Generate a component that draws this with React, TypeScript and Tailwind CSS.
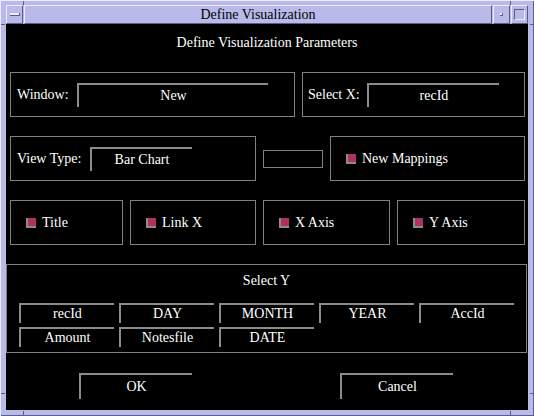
const font = { fontFamily: '"Liberation Serif", "Times New Roman", serif' };

const Check = () => (
  <span className="w-[10px] h-[10px] border-l-2 border-b-2 border-[#8c8c8c] flex">
    <span className="flex-1 bg-[#b0305f]" />
  </span>
);

const Field = ({ w, h = "h-[24px]", children }: { w: string; h?: string; children?: React.ReactNode }) => (
  <div className={`${w} ${h} border-t-2 border-l-2 border-[#8c8c8c] flex items-center justify-center text-white`}>
    {children}
  </div>
);

const CheckBox = ({ label, w }: { label: string; w: string }) => (
  <div className={`${w} h-[45px] border border-[#808080] flex items-center pl-[15px] gap-[6px]`}>
    <Check />
    <span>{label}</span>
  </div>
);

export default function App() {
  const yCols = ["recId", "DAY", "MONTH", "YEAR", "AccId", "Amount", "Notesfile", "DATE"];
  return (
    <div
      style={font}
      className="w-[534px] h-[416px] bg-[#babaea] relative border-t border-l border-[#ececff] text-[14px] leading-[16px]"
    >
      {/* frame notches */}
      <div className="absolute left-[22px] top-0 w-[1px] h-[4px] bg-[#5c5c8c]" />
      <div className="absolute left-[509px] top-0 w-[1px] h-[4px] bg-[#5c5c8c]" />
      <div className="absolute left-[22px] bottom-0 w-[1px] h-[5px] bg-[#5c5c8c]" />
      <div className="absolute left-[509px] bottom-0 w-[1px] h-[5px] bg-[#5c5c8c]" />
      <div className="absolute left-0 top-[23px] w-[4px] h-[1px] bg-[#5c5c8c]" />
      <div className="absolute right-0 top-[23px] w-[4px] h-[1px] bg-[#5c5c8c]" />
      <div className="absolute left-0 top-[392px] w-[4px] h-[1px] bg-[#5c5c8c]" />
      <div className="absolute right-0 top-[392px] w-[4px] h-[1px] bg-[#5c5c8c]" />

      <div className="absolute inset-0 border-r border-b border-[#5c5c8c] pointer-events-none" />

      <div className="pl-[5px] pt-[4px] flex flex-col">
        {/* title bar */}
        <div className="flex h-[19px] w-[522px] gap-[1px]">
          <div className="w-[17px] h-full bg-[#babaea] border-t border-l border-[#ececff] border-r border-b border-r-[#5c5c8c] border-b-[#5c5c8c] flex items-center justify-center">
            <div className="w-[10px] h-[3px] bg-[#ececff] border-b border-r border-[#5c5c8c]" />
          </div>
          <div className="flex-1 h-full bg-[#babaea] border-t border-l border-[#ececff] border-r border-b border-r-[#5c5c8c] border-b-[#5c5c8c] flex items-center justify-center text-black">
            Define Visualization
          </div>
          <div className="w-[17px] h-full bg-[#babaea] border-t border-l border-[#ececff] border-r border-b border-r-[#5c5c8c] border-b-[#5c5c8c] flex items-center justify-center">
            <div className="w-[3px] h-[3px] bg-[#ececff] border-b border-r border-[#5c5c8c]" />
          </div>
          <div className="w-[17px] h-full bg-[#babaea] border-t border-l border-[#ececff] border-r border-b border-r-[#5c5c8c] border-b-[#5c5c8c] flex items-center justify-center">
            <div className="w-[11px] h-[11px] border border-t-[#5c5c8c] border-l-[#5c5c8c] border-r-[#ececff] border-b-[#ececff]" />
          </div>
        </div>

        {/* content */}
        <div className="w-[522px] h-[386px] bg-black text-white flex flex-col">
          <div className="h-[38px] flex items-center justify-center">Define Visualization Parameters</div>

          <div className="mt-[10px] pl-[4px] flex gap-[7px]">
            <div className="w-[285px] h-[45px] border border-[#808080] flex items-center pl-[6px]">
              <span className="w-[60px]">Window:</span>
              <Field w="w-[191px]">New</Field>
            </div>
            <div className="w-[223px] h-[45px] border border-[#808080] flex items-center pl-[5px]">
              <span className="w-[59px]">Select X:</span>
              <Field w="w-[132px]">recId</Field>
            </div>
          </div>

          <div className="mt-[19px] pl-[4px] flex items-center gap-[7px]">
            <div className="w-[246px] h-[45px] border border-[#808080] flex items-center pl-[6px]">
              <span className="w-[73px]">View Type:</span>
              <Field w="w-[102px]">Bar Chart</Field>
            </div>
            <div className="w-[60px] h-[18px] border border-[#808080]" />
            <div className="w-[195px] h-[45px] border border-[#808080] flex items-center pl-[15px] gap-[6px]">
              <Check />
              <span>New Mappings</span>
            </div>
          </div>

          <div className="mt-[19px] pl-[4px] flex gap-[7px]">
            <CheckBox label="Title" w="w-[113px]" />
            <CheckBox label="Link X" w="w-[126px]" />
            <CheckBox label="X Axis" w="w-[127px]" />
            <CheckBox label="Y Axis" w="w-[128px]" />
          </div>

          <div className="mt-[19px] w-[521px] h-[89px] border border-[#808080] flex flex-col pt-[8px]">
            <div className="text-center h-[16px]">Select Y</div>
            <div className="mt-[14px] pl-[12px] grid grid-cols-[repeat(5,95px)] gap-x-[5px] gap-y-[4px]">
              {yCols.map((c) => (
                <Field key={c} w="w-[95px]" h="h-[20px]">
                  {c}
                </Field>
              ))}
            </div>
          </div>

          <div className="mt-[20px] flex">
            <div className="ml-[73px]">
              <Field w="w-[113px]" h="h-[26px]">OK</Field>
            </div>
            <div className="ml-[148px]">
              <Field w="w-[113px]" h="h-[26px]">Cancel</Field>
            </div>
          </div>
        </div>
      </div>
    </div>
  );
}
